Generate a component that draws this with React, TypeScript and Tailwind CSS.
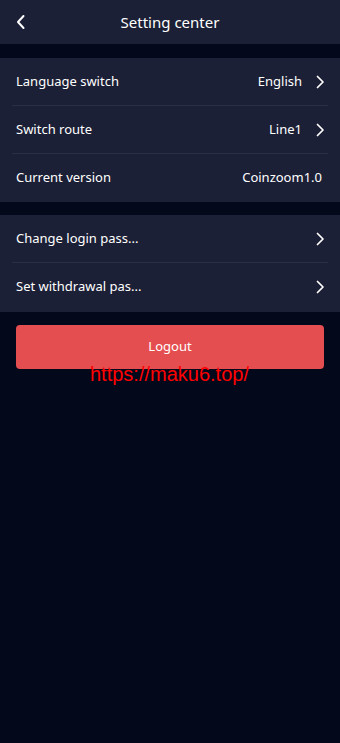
import React from "react";

const Chevron = ({ className = "" }: { className?: string }) => (
  <svg width="10" height="14" viewBox="0 0 10 14" className={className} fill="none">
    <path d="M2.5 1.5 L8 7 L2.5 12.5" stroke="#ffffff" strokeWidth="1.7" strokeLinecap="round" strokeLinejoin="round" />
  </svg>
);

const Row = ({ label, value, arrow = true, last = false }: { label: string; value?: string; arrow?: boolean; last?: boolean }) => (
  <div className="px-3">
    <div className={`flex items-center h-12 px-1 ${last ? "" : "border-b border-[#2a2f44]"}`}>
      <span className="text-[13px] text-white flex-1">{label}</span>
      {value && <span className="text-[13px] text-white">{value}</span>}
      {arrow && <Chevron className="ml-[13px] mr-[-1px]" />}
      {!arrow && <span className="w-[2px]" />}
    </div>
  </div>
);

export default function App() {
  return (
    <div
      className="relative w-[340px] h-[743px] bg-[#03081a] overflow-hidden"
      style={{ fontFamily: '"Noto Sans", "Open Sans", sans-serif' }}
    >
      <div className="h-11 bg-[#1c2036] flex items-center relative">
        <svg width="12" height="16" viewBox="0 0 12 16" className="absolute left-[15px] top-[14px]" fill="none">
          <path d="M8.5 2 L3 8 L8.5 14" stroke="#ffffff" strokeWidth="2" strokeLinecap="round" strokeLinejoin="round" />
        </svg>
        <div className="flex-1 text-center text-white text-[15px]">Setting center</div>
      </div>
      <div className="h-[14px]" />
      <div className="bg-[#1c2036]">
        <Row label="Language switch" value="English" />
        <Row label="Switch route" value="Line1" />
        <Row label="Current version" value="Coinzoom1.0" arrow={false} last />
      </div>
      <div className="h-[13px]" />
      <div className="bg-[#1c2036] pb-px">
        <Row label="Change login pass..." />
        <Row label="Set withdrawal pas..." last />
      </div>
      <div className="px-4 pt-[13px]">
        <button className="w-full h-11 rounded bg-[#e54e50] text-white text-[13px]">Logout</button>
      </div>
      <div
        className="absolute left-[90px] top-[362px] text-[#ff0000] text-[20px] leading-[24px]"
        style={{ fontFamily: '"Liberation Sans", Arial, sans-serif' }}
      >
        https://maku6.top/
      </div>
    </div>
  );
}
